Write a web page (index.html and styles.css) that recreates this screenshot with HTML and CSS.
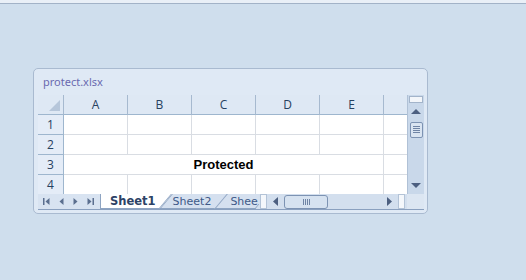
FILE: index.html
```html
<!DOCTYPE html>
<html lang="en">
<head>
    <meta charset="UTF-8">
    <meta name="viewport" content="width=device-width, initial-scale=1.0">
    <title>protect.xlsx</title>
    <link rel="stylesheet" href="styles.css">
</head>
<body>

    <div class="topbar"></div>

    <div class="window">
        <div class="title">protect.xlsx</div>

        <div class="sheet">
            <div class="grid">
                <div class="row head">
                    <div class="cell rh corner"></div>
                    <div class="cell col">A</div>
                    <div class="cell col">B</div>
                    <div class="cell col">C</div>
                    <div class="cell col">D</div>
                    <div class="cell col">E</div>
                    <div class="cell col last"></div>
                </div>
                <div class="row">
                    <div class="cell rh">1</div>
                    <div class="cell"></div>
                    <div class="cell"></div>
                    <div class="cell"></div>
                    <div class="cell"></div>
                    <div class="cell"></div>
                    <div class="cell last"></div>
                </div>
                <div class="row">
                    <div class="cell rh">2</div>
                    <div class="cell"></div>
                    <div class="cell"></div>
                    <div class="cell"></div>
                    <div class="cell"></div>
                    <div class="cell"></div>
                    <div class="cell last"></div>
                </div>
                <div class="row">
                    <div class="cell rh">3</div>
                    <div class="cell merged">Protected</div>
                    <div class="cell last"></div>
                </div>
                <div class="row short">
                    <div class="cell rh">4</div>
                    <div class="cell"></div>
                    <div class="cell"></div>
                    <div class="cell"></div>
                    <div class="cell"></div>
                    <div class="cell"></div>
                    <div class="cell last"></div>
                </div>
            </div>

            <div class="vscroll">
                <div class="splitbox"></div>
                <div class="arrow up"></div>
                <div class="vthumb"><span></span><span></span><span></span><span></span></div>
                <div class="vtrack"></div>
                <div class="arrow down"></div>
            </div>
        </div>

        <div class="tabbar">
            <div class="nav">
                <svg width="9" height="9" viewBox="0 0 9 9"><rect x="1" y="1" width="1.5" height="7" fill="#5b6f8f"/><path d="M7.5 1 L3.5 4.5 L7.5 8 Z" fill="#5b6f8f"/></svg>
                <svg width="9" height="9" viewBox="0 0 9 9"><path d="M6.5 1 L2.5 4.5 L6.5 8 Z" fill="#5b6f8f"/></svg>
                <svg width="9" height="9" viewBox="0 0 9 9"><path d="M2.5 1 L6.5 4.5 L2.5 8 Z" fill="#5b6f8f"/></svg>
                <svg width="9" height="9" viewBox="0 0 9 9"><path d="M1.5 1 L5.5 4.5 L1.5 8 Z" fill="#5b6f8f"/><rect x="6.5" y="1" width="1.5" height="7" fill="#5b6f8f"/></svg>
            </div>
            <div class="tabs">
                <div class="tab active">Sheet1</div>
                <div class="tab">Sheet2</div>
                <div class="tab cut">Shee</div>
            </div>
            <div class="splitter"></div>
            <div class="hscroll">
                <svg class="harrow" width="6" height="9" viewBox="0 0 6 9"><path d="M5 0 L0 4.5 L5 9 Z" fill="#4c5f80"/></svg>
                <div class="hthumb"><span></span><span></span><span></span><span></span></div>
                <div class="htrack"></div>
                <svg class="harrow" width="6" height="9" viewBox="0 0 6 9"><path d="M1 0 L6 4.5 L1 9 Z" fill="#4c5f80"/></svg>
            </div>
            <div class="splitter end"></div>
            <div class="corner-box"></div>
        </div>
    </div>

</body>
</html>
```

FILE: styles.css
```css
body {
    margin: 0px;
    background-color: #cfdeed;
    font-family: "Noto Sans", "DejaVu Sans", sans-serif;
}
.topbar {
    height: 3px;
    background-color: #e9eff7;
    border-bottom: 1px solid #a2b2c7;
}
.window {
    box-sizing: border-box;
    width: 395px;
    height: 146px;
    margin: 64px 0 0 33px;
    padding: 0 3px 3px 4px;
    background-color: #dfe9f5;
    border: 1px solid #a9bad0;
    border-radius: 5px;
}
.title {
    height: 26px;
    padding-left: 5px;
    font-size: 11px;
    line-height: 26px;
    color: #6a6ab0;
}

/* sheet */
.sheet {
    display: flex;
    height: 99px;
    overflow: hidden;
}
.grid {
    width: 369px;
    background-color: white;
}
.row {
    display: flex;
    height: 20px;
}
.row.short {
    height: 19px;
}
.cell {
    box-sizing: border-box;
    width: 64px;
    height: 20px;
    border-right: 1px solid #d9dde3;
    border-bottom: 1px solid #d9dde3;
    font-family: "Liberation Sans", Arial, sans-serif;
    font-size: 13px;
    line-height: 19px;
    text-align: center;
}
.cell.last {
    width: 23px;
    border-right: none;
}
.cell.merged {
    width: 320px;
    font-weight: bold;
    color: black;
}
.cell.rh {
    width: 26px;
    background-color: #e4ecf7;
    border-right: 1px solid #9eb6ce;
    border-bottom: 1px solid #9eb6ce;
    font-family: "Open Sans", sans-serif;
    font-size: 12px;
    color: #27415f;
}
.row.head .cell {
    background-color: #dee8f4;
    border-right: 1px solid #a6b9cf;
    border-bottom: 1px solid #9eb6ce;
    font-family: "Open Sans", sans-serif;
    font-size: 12px;
    color: #27415f;
}
.row.head .cell.last {
    border-right: none;
}
.corner {
    position: relative;
}
.corner::after {
    content: "";
    position: absolute;
    right: 3px;
    bottom: 3px;
    width: 0;
    height: 0;
    border-left: 11px solid transparent;
    border-bottom: 11px solid #b6c6da;
}

/* vertical scroll */
.vscroll {
    box-sizing: border-box;
    width: 17px;
    display: flex;
    flex-direction: column;
    align-items: center;
    background-color: #c9d8ea;
    border-left: 1px solid #b0c1d6;
}
.splitbox {
    width: 12px;
    height: 5px;
    margin-top: 1px;
    background-color: #f3f6fa;
    border: 1px solid #a3b4ca;
}
.arrow {
    width: 0;
    height: 0;
    border-left: 5px solid transparent;
    border-right: 5px solid transparent;
}
.arrow.up {
    margin-top: 6px;
    border-bottom: 5px solid #4c5f80;
}
.arrow.down {
    margin-bottom: 6px;
    border-top: 5px solid #4c5f80;
}
.vthumb {
    box-sizing: border-box;
    width: 13px;
    height: 16px;
    margin-top: 8px;
    padding-top: 3px;
    background-color: #d9e4f1;
    border: 1px solid #7d93b3;
    border-radius: 2px;
    display: flex;
    flex-direction: column;
    align-items: center;
    gap: 1px;
}
.vthumb span {
    width: 7px;
    height: 1px;
    background-color: #6f84a5;
}
.vtrack {
    flex: 1;
}

/* tab bar */
.tabbar {
    display: flex;
    height: 16px;
    background-color: #d3dfee;
    border-bottom: 1px solid #8aa0bf;
    box-sizing: border-box;
}
.nav {
    box-sizing: border-box;
    width: 63px;
    display: flex;
    align-items: center;
    justify-content: space-between;
    padding: 0 5px 0 4px;
    background-color: #d8e3f1;
    border-right: 1px solid #8ea4c2;
}
.tabs {
    display: flex;
    width: 158px;
    overflow: hidden;
}
.tab {
    position: relative;
    z-index: 0;
    padding: 0 6px 0 11px;
    font-family: "DejaVu Sans", sans-serif;
    font-size: 11px;
    line-height: 15px;
    color: #3d5987;
    white-space: nowrap;
}
.tab::before {
    content: "";
    position: absolute;
    top: -1px;
    bottom: 0;
    left: 4px;
    right: -4px;
    z-index: -1;
    background-color: #d5e0ef;
    border: 1px solid #8ea4c2;
    border-top: none;
    transform: skewX(-40deg);
}
.tab.active {
    z-index: 1;
    padding-left: 9px;
    font-weight: bold;
    font-size: 11.5px;
    color: #2d4266;
}
.tab.active::before {
    left: -8px;
    background-color: white;
}
.tab.cut {
    padding-left: 13px;
    padding-right: 0;
}
.splitter {
    width: 5px;
    height: 13px;
    margin: 0 1px;
    background-color: #f4f7fb;
    border: 1px solid #b3c3d7;
}
.hscroll {
    flex: 1;
    display: flex;
    align-items: center;
    padding: 0 4px 0 5px;
}
.harrow {
    flex-shrink: 0;
}
.hthumb {
    box-sizing: border-box;
    width: 44px;
    height: 14px;
    margin-left: 5px;
    display: flex;
    align-items: center;
    justify-content: center;
    gap: 1px;
    background-color: #d6e2f0;
    border: 1px solid #7d93b3;
    border-radius: 3px;
}
.hthumb span {
    width: 1px;
    height: 6px;
    background-color: #6f84a5;
}
.htrack {
    flex: 1;
}
.splitter.end {
    margin: 0 2px 0 2px;
}
.corner-box {
    width: 17px;
    background-color: #dce6f2;
}
```
